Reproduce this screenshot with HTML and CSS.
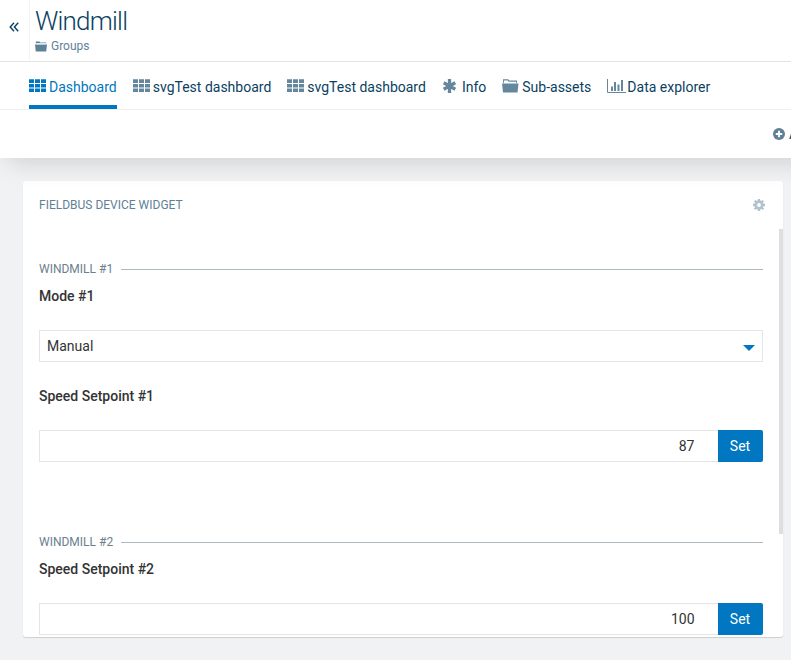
FILE: index.html
```html
<!DOCTYPE html>
<html lang="en">
<head>
<meta charset="utf-8">
<title>Windmill</title>
<link rel="stylesheet" href="styles.css">
</head>
<body>
<svg class="defs" width="0" height="0">
  <symbol id="grid" viewBox="0 0 17 14">
    <path d="M0 .3h5v3.600H0zM6 .3h5v3.600H6zM12 .3h5v3.600h-5zM0 5h5v3.500H0zM6 5h5v3.500H6zM12 5h5v3.500h-5zM0 9.500h5V13H0zM6 9.500h5V13H6zM12 9.500h5V13h-5z" fill="currentColor"/>
  </symbol>
  <symbol id="folder" viewBox="0 0 17 14">
    <path d="M1 4V.2h5.200l1 1.300H15v2.500h-.9V2.700H6.700l-1-1.300H1.900V4zM0 4.500h16.500L15.500 13.500H1z" fill="currentColor"/>
  </symbol>
</svg>
<header class="header">
  <div class="title-bar">
    <div class="toggle">
      <svg width="10" height="10" viewBox="0 0 10 10"><path d="M5 .7L1.200 5 5 9.300M9.200.7L5.400 5l3.800 4.300" fill="none" stroke="currentColor" stroke-width="1.400"/></svg>
    </div>
    <div class="titles">
      <h1>Windmill</h1>
      <div class="crumb"><svg width="12" height="11" viewBox="0 0 12 11"><path d="M.8 2.500V.5h3.700l.7 1h6v1.300M0 3.500h12l-.8 7H.8z" fill="currentColor"/><path d="M1.200 2.700h10" stroke="#fff" stroke-width=".9"/></svg>Groups</div>
    </div>
  </div>
  <nav class="tabs">
    <a class="tab active"><svg class="icon"><use href="#grid"/></svg><span>Dashboard</span></a>
    <a class="tab"><svg class="icon"><use href="#grid"/></svg><span>svgTest dashboard</span></a>
    <a class="tab"><svg class="icon"><use href="#grid"/></svg><span>svgTest dashboard</span></a>
    <a class="tab info"><svg class="icon" viewBox="0 0 13 14"><path d="M6.500 0v14M.7 3.700l11.600 6.600M.7 10.300l11.600-6.600" stroke="currentColor" stroke-width="3.300" fill="none"/></svg><span>Info</span></a>
    <a class="tab sub"><svg class="icon"><use href="#folder"/></svg><span>Sub-assets</span></a>
    <a class="tab data"><svg class="icon" viewBox="0 0 19 15"><path d="M.5 0v13.500H19" stroke="currentColor" fill="none"/><path d="M4 7.500h2V12H4zM7 3h2v9H7zM10.500 5.500h2V12h-2zM14 1h2v11h-2z" fill="currentColor"/></svg><span>Data explorer</span></a>
  </nav>
  <div class="actions">
    <svg width="12" height="12" viewBox="0 0 12 12"><circle cx="6" cy="6" r="6" fill="currentColor"/><path d="M6 2.800v6.400M2.800 6h6.400" stroke="#fff" stroke-width="1.900"/></svg>
    <span>Add widget</span>
  </div>
</header>
<main class="card">
  <div class="card-head">
    <span>FIELDBUS DEVICE WIDGET</span>
    <svg width="12" height="12" viewBox="0 0 12 12"><circle cx="6" cy="6" r="3.300" fill="none" stroke="currentColor" stroke-width="2.700"/><path d="M6 0v2.500M6 9.500V12M0 6h2.500M9.500 6H12M1.700 1.700l1.600 1.600M8.700 8.700l1.600 1.600M1.700 10.300l1.600-1.600M8.700 3.300l1.600-1.600" stroke="currentColor" stroke-width="2.300"/></svg>
  </div>
  <div class="scroll">
    <div class="content">
      <section class="group">
        <div class="legend">WINDMILL #1</div>
        <label>Mode #1</label>
        <div class="field select"><span>Manual</span><svg width="12" height="6" viewBox="0 0 12 6"><path d="M0 0h12L6 6z" fill="#0077c0"/></svg></div>
        <label class="next">Speed Setpoint #1</label>
        <div class="row"><div class="field value">87</div><button>Set</button></div>
      </section>
      <section class="group">
        <div class="legend">WINDMILL #2</div>
        <label>Speed Setpoint #2</label>
        <div class="row"><div class="field value">100</div><button>Set</button></div>
      </section>
    </div>
    <div class="track"><div class="thumb"></div></div>
  </div>
</main>
</body>
</html>
```
FILE: styles.css
```css
* { box-sizing: border-box; }
body {
  margin: 0;
  height: 660px;
  overflow: hidden;
  background: #f0f2f4;
  font: 14px/20px Roboto, sans-serif;
  color: #333;
}
svg { display: block; flex: none; }
.defs { position: absolute; }
.header {
  position: relative;
  z-index: 1;
  width: 880px;
  height: 158px;
  background: #fff;
  color: #0b3f62;
  box-shadow: 0 12px 24px -8px rgba(0, 0, 0, .15);
}
.title-bar { display: flex; height: 62px; border-bottom: 1px solid #e2e4e6; }
.toggle { width: 30px; padding: 22px 0 0 9px; border-right: 1px solid #f3f4f5; }
.titles { padding: 5px 0 0 5px; }
h1 { margin: 0; font-size: 26px; line-height: 32px; font-weight: 300; letter-spacing: -.78px; }
.crumb { display: flex; align-items: center; gap: 4px; height: 18px; font-size: 12px; color: #5f8198; }
.tabs { display: flex; gap: 16px; height: 48px; padding-left: 29px; border-bottom: 1px solid #eee; }
.tab { display: flex; gap: 3px; height: 47px; padding-top: 15px; white-space: nowrap; }
.tab .icon { width: 17px; height: 14px; margin-top: 2px; color: #64879d; }
.tab.active { color: #0077c0; border-bottom: 4px solid #0077c0; }
.tab.active .icon { color: inherit; }
.tab.info { gap: 6px; padding-left: 1px; }
.tab.info .icon { width: 13px; }
.tab.data { gap: 1px; }
.tab.data .icon { width: 19px; height: 15px; }
.actions { display: flex; align-items: center; gap: 4px; height: 48px; padding-left: 773px; overflow: hidden; white-space: nowrap; }
.actions svg { color: #5f8198; }
.card {
  width: 760px;
  height: 456px;
  margin: 23px 0 0 23px;
  background: #fff;
  border-radius: 3px;
  overflow: hidden;
  box-shadow: 0 1px 1px rgba(0, 0, 0, .15);
}
.card-head {
  display: flex;
  justify-content: space-between;
  align-items: center;
  height: 48px;
  padding: 0 18px 0 16px;
  font-size: 12px;
  color: #5f8198;
}
.card-head svg { color: #b0c2ce; }
.scroll { display: flex; height: 408px; overflow: hidden; }
.content { width: 756px; padding: 30px 16px 0; }
.group { width: 724px; height: 273px; }
.legend { display: flex; align-items: center; gap: 8px; height: 20px; font-size: 12px; color: #6b7f8e; }
.legend::after { content: ""; flex: 1; height: 1px; margin-top: 1px; background: #aeb8bf; }
label { display: block; height: 20px; margin: 7px 0 24px; font-weight: 500; }
label.next { margin: 24px 0; }
.field { display: flex; align-items: center; height: 32px; border: 1px solid #e4e5e6; }
.select { justify-content: space-between; padding: 0 7px; }
.select svg { margin-top: 3px; }
.row { display: flex; }
.value { flex: 1; justify-content: flex-end; padding-right: 23.500px; border-right: 0; }
button {
  width: 45px;
  height: 32px;
  padding: 0 1px 0 0;
  border: 0;
  border-radius: 0 2px 2px 0;
  background: #0077c0;
  color: #fff;
  font: inherit;
}
.track { width: 4px; }
.thumb { height: 305px; background: #dcdee0; }
```
